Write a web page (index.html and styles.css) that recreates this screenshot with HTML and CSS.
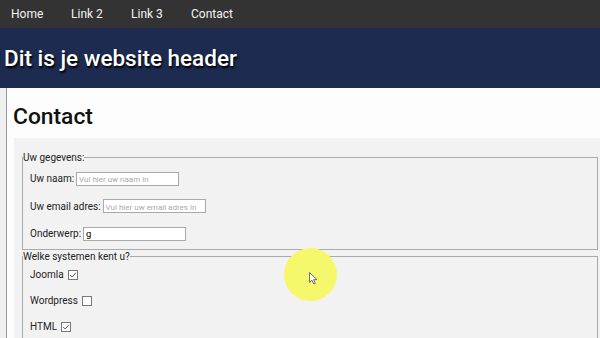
FILE: index.html
```html
<!DOCTYPE html>
<html>
    <head>
        <title>Contact</title>
        <meta name="viewport" content="width=device-width, initial-scale=1" />
        <meta charset="utf-8" />
        <link rel="stylesheet" href="styles.css">
    </head>
    <body>

        <nav class="topnav">
            <a href="#">Home</a>
            <a href="#">Link 2</a>
            <a href="#">Link 3</a>
            <a href="#">Contact</a>
        </nav>

        <header class="siteHeader">
            <h1>Dit is je website header</h1>
        </header>

        <main class="page">
            <h1 class="pageTitle">Contact</h1>

            <form class="contactForm">
                <fieldset class="details">
                    <legend>Uw gegevens:</legend>
                    <p class="row">
                        <label for="naam">Uw naam:</label>
                        <input type="text" id="naam" placeholder="Vul hier uw naam in">
                    </p>
                    <p class="row">
                        <label for="email">Uw email adres:</label>
                        <input type="text" id="email" placeholder="Vul hier uw email adres in">
                    </p>
                    <p class="row">
                        <label for="onderwerp">Onderwerp:</label>
                        <input type="text" id="onderwerp" value="g">
                    </p>
                </fieldset>

                <fieldset>
                    <legend>Welke systemen kent u?</legend>
                    <p class="row check">
                        <label>Joomla</label>
                        <svg class="box" width="10" height="10" viewBox="0 0 10 10"><rect x="0.5" y="0.5" width="9" height="9" fill="#fff" stroke="#777"/><path d="M2.2 5 L4.2 7 L7.8 2.8" fill="none" stroke="#555" stroke-width="1"/></svg>
                    </p>
                    <p class="row check">
                        <label>Wordpress</label>
                        <svg class="box" width="10" height="10" viewBox="0 0 10 10"><rect x="0.5" y="0.5" width="9" height="9" fill="#fff" stroke="#777"/></svg>
                    </p>
                    <p class="row check">
                        <label>HTML</label>
                        <svg class="box" width="10" height="10" viewBox="0 0 10 10"><rect x="0.5" y="0.5" width="9" height="9" fill="#fff" stroke="#777"/><path d="M2.2 5 L4.2 7 L7.8 2.8" fill="none" stroke="#555" stroke-width="1"/></svg>
                    </p>
                </fieldset>
            </form>
        </main>

        <!-- cursor highlight from the screen recording -->
        <div class="clickSpot">
            <svg width="9" height="13" viewBox="0 0 9 13"><path d="M0.5 0.5 L0.5 10.5 L3 8.2 L4.8 12 L6.3 11.3 L4.6 7.6 L8 7.6 Z" fill="#fff" stroke="#666" stroke-width="0.9"/></svg>
        </div>

    </body>
</html>
```

FILE: styles.css
```css
html {
    font-family: Roboto, "Liberation Sans", sans-serif;
}
body {
    margin: 0;
    background: #f0f0f0;
    height: 338px;
    overflow: hidden;
}

.topnav {
    display: flex;
    height: 28px;
    background: #333333;
}
.topnav a {
    width: 60px;
    padding-left: 11px;
    box-sizing: border-box;
    color: #f2f2f2;
    text-decoration: none;
    font-size: 12px;
    line-height: 28px;
}

.siteHeader {
    height: 60px;
    background: #1c2b4f;
    display: flex;
    align-items: center;
}
.siteHeader h1 {
    margin: 0 0 0 4px;
    color: #ffffff;
    font-size: 22.5px;
    font-weight: 500;
    text-shadow: 1px 2px 2px #000;
}

.page {
    margin-left: 6px;
    border-left: 1px solid #9a9a9a;
    background: #fdfdfd;
    height: 250px;
}
.pageTitle {
    margin: 0;
    height: 50px;
    padding-left: 6px;
    box-sizing: border-box;
    padding-top: 15px;
    font-size: 22.8px;
    font-weight: 500;
    line-height: 28px;
    color: #111;
}

.contactForm {
    margin-left: 7px;
    padding: 14px 0 0 8px;
    background: #f2f2f2;
    height: 200px;
}
fieldset {
    margin: 0 2px 1px 0;
    padding: 0 0 1px 0;
    border: 1px solid #aaaaaa;
}
.details {
    padding-top: 2px;
}
legend {
    padding: 0;
    font-size: 10px;
    color: #222;
}
.row {
    margin: 0;
    height: 27.5px;
    padding-left: 7px;
    display: flex;
    align-items: center;
    gap: 2px;
    font-size: 10px;
    color: #222;
}
.row input {
    width: 103px;
    height: 14px;
    box-sizing: border-box;
    padding: 0 2px;
    border: 1px solid #a9a9a9;
    font-family: inherit;
    font-size: 9.5px;
    background: #fff;
}
.row input::placeholder {
    color: #aaa;
    font-size: 8px;
}
.check {
    height: 26px;
    gap: 4px;
}

.clickSpot {
    position: absolute;
    left: 284px;
    top: 248px;
    width: 53px;
    height: 53px;
    border-radius: 50%;
    background: #f5f86b;
}
.clickSpot svg {
    position: absolute;
    left: 25px;
    top: 24px;
}
```
